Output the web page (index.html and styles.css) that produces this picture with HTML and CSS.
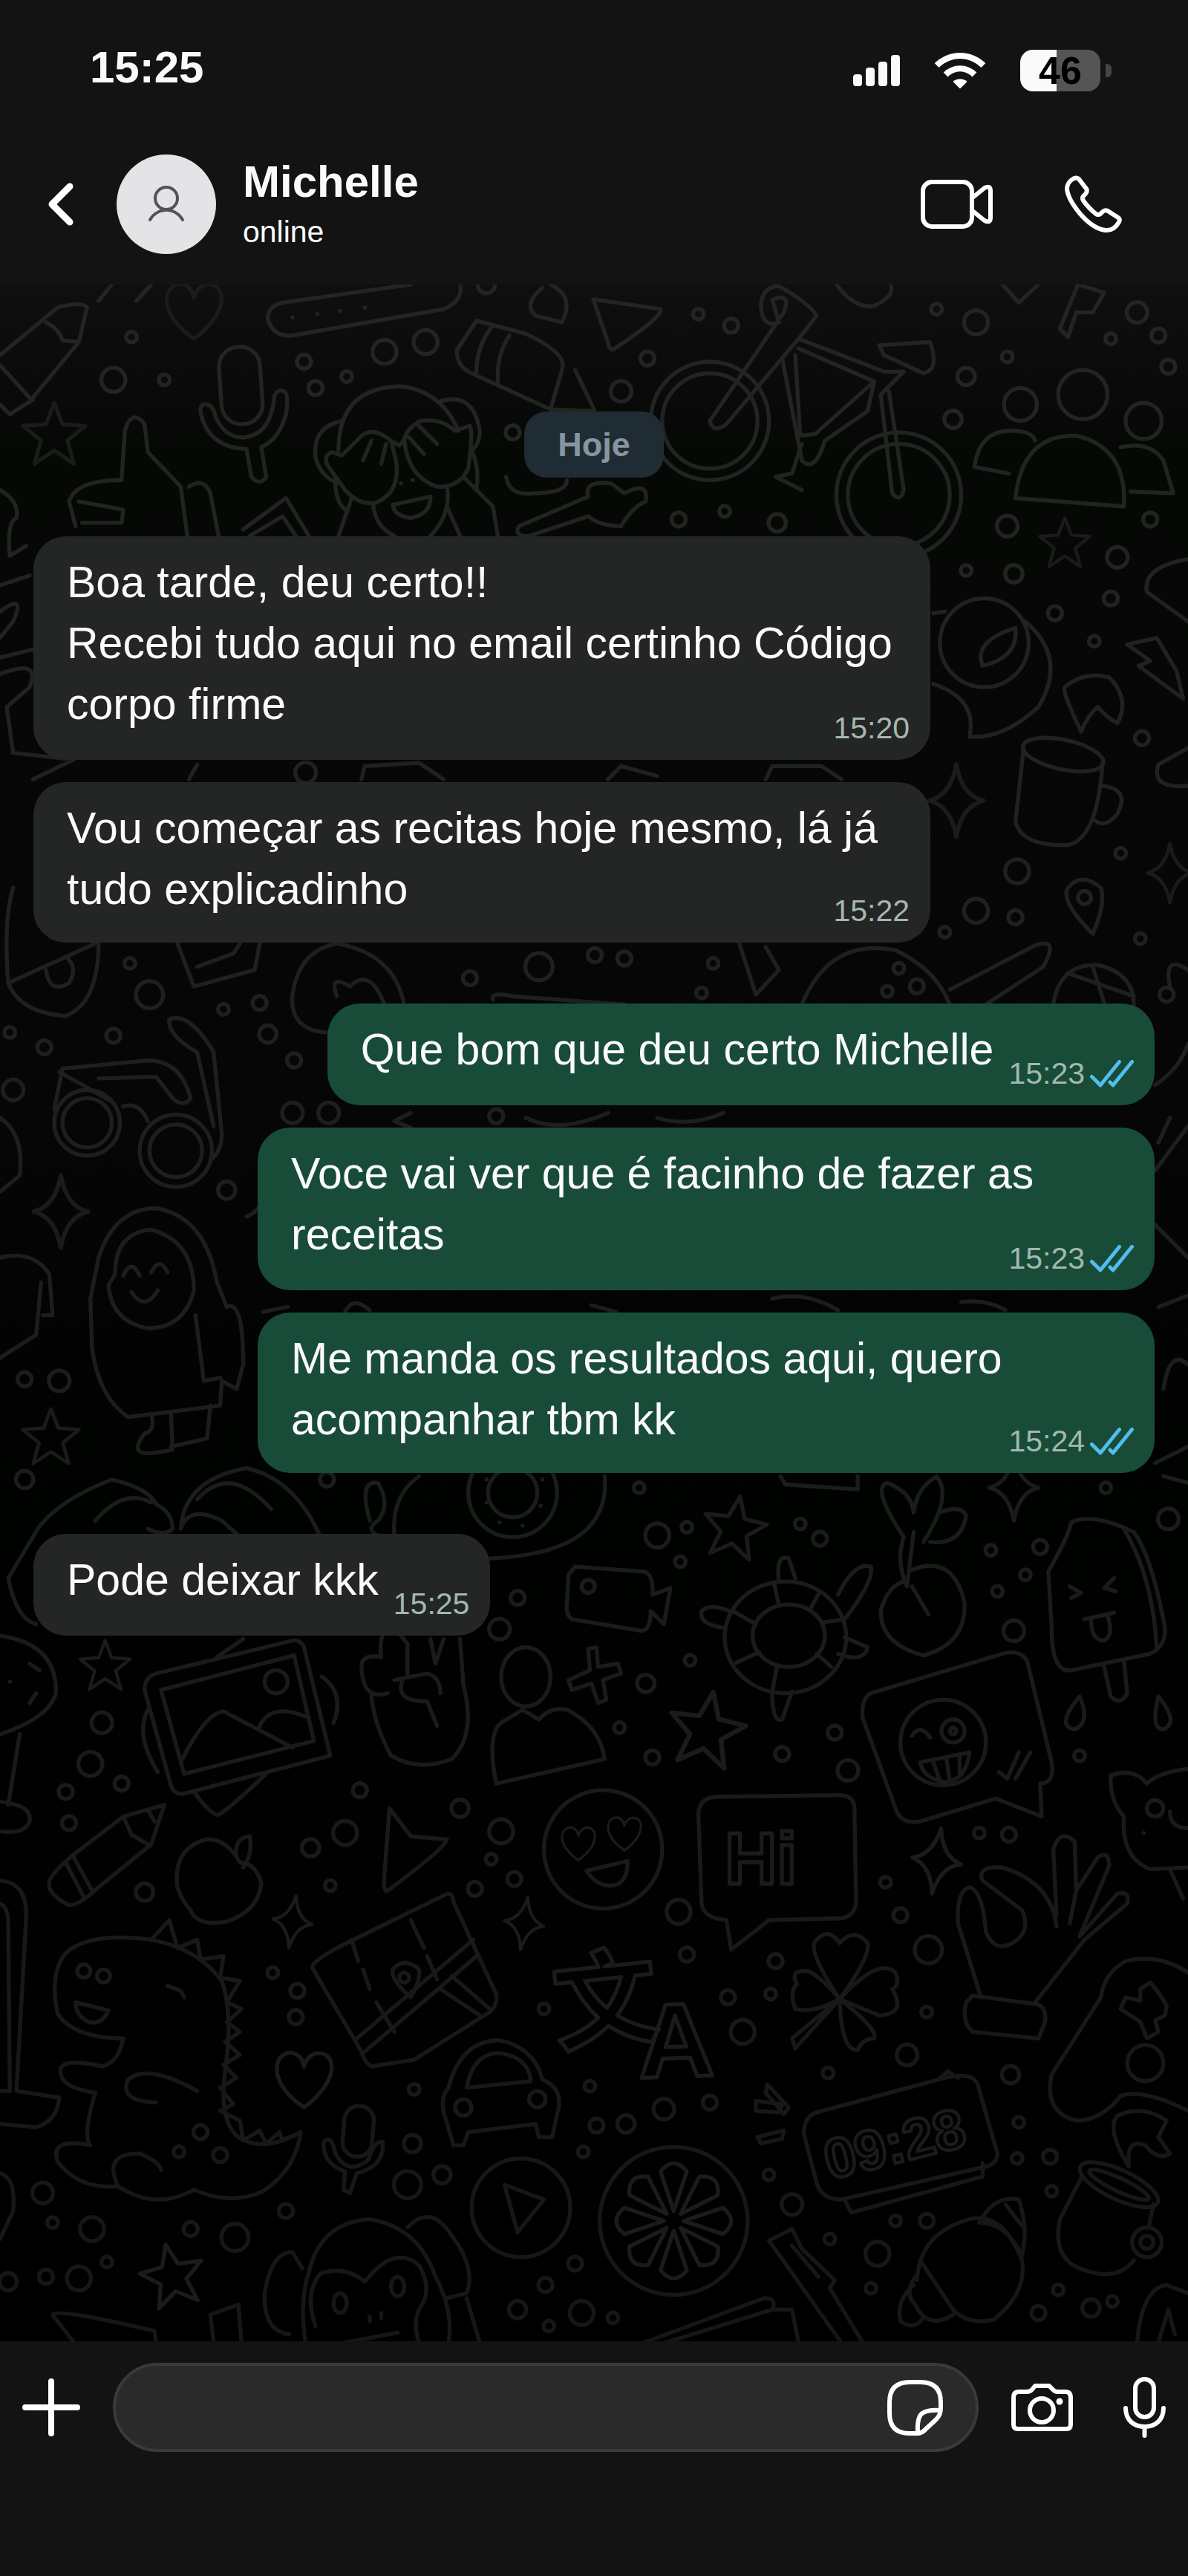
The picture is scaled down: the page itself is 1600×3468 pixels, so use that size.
FILE: index.html
```html
<!DOCTYPE html>
<html lang="pt-BR">
<head>
    <meta charset="UTF-8">
    <meta name="viewport" content="width=device-width, initial-scale=1.0">
    <title>Michelle</title>
    <link rel="stylesheet" href="styles.css">
</head>
<body>
<header class="top">
    <div class="status">
        <time class="clock">15:25</time>
        <div class="statusIcons">
            <svg width="63" height="42" viewBox="0 0 63 42" fill="#fafafa">
                <rect x="0" y="26" width="12" height="16" rx="4"/>
                <rect x="17" y="17" width="12" height="25" rx="4"/>
                <rect x="34" y="9" width="12" height="33" rx="4"/>
                <rect x="51" y="0" width="12" height="42" rx="4"/>
            </svg>
            <svg width="70" height="50" viewBox="0 0 70 50" fill="#fff">
                <path d="M0.7 15A49 49 0 0 1 69.3 15L63.5 21A40 40 0 0 0 6.5 21Z"/>
                <path d="M12.7 27.5A31.5 31.5 0 0 1 57.3 27.5L51.5 33.5A22.5 22.5 0 0 0 18.5 33.5Z"/>
                <path d="M25.5 40A14 14 0 0 1 44.5 40L36 48.5Q35 49.5 34 48.5Z"/>
            </svg>
            <div class="battery"><span class="level">46</span></div>
        </div>
    </div>
    <div class="contact">
        <button class="icon back" aria-label="Voltar">
            <svg width="34" height="58" viewBox="0 0 34 58"><path d="M29 5L5 29L29 53" stroke-width="9"/></svg>
        </button>
        <div class="avatar">
            <svg width="60" height="60" viewBox="0 0 60 60" fill="none" stroke="#52525b" stroke-width="4" stroke-linecap="round">
                <circle cx="30" cy="22" r="15"/>
                <path d="M8 51A25 25 0 0 1 52 51"/>
            </svg>
        </div>
        <div class="who">
            <h1>Michelle</h1>
            <p>online</p>
        </div>
        <button class="icon video" aria-label="Chamada de vídeo">
            <svg width="98" height="66" viewBox="0 0 98 66">
                <rect x="3" y="3" width="66" height="60" rx="12"/>
                <path d="M70 24L86 11Q94 7 94 15V51Q94 59 86 55L70 42"/>
            </svg>
        </button>
        <button class="icon" aria-label="Ligar">
            <svg width="78" height="78" viewBox="0 0 78 78"><path d="M11 5Q15 2 19 5L29 18Q31 21 28 25L25 28Q23 31 25 34Q32 44 42 52Q45 54 48 52L51 49Q54 46 58 48L72 57Q75 59 73 63Q66 75 55 74Q38 72 20 51Q3 30 3 17Q4 9 11 5Z"/></svg>
        </button>
    </div>
</header>

<main class="chat">
    <svg class="wallpaper" viewBox="0 173 723 1252" preserveAspectRatio="xMidYMin slice" aria-hidden="true">
        <defs>
            <linearGradient id="ink" gradientUnits="userSpaceOnUse" x1="0" y1="173" x2="0" y2="1425">
                <stop offset="0" stop-color="#232522"/>
                <stop offset="1" stop-color="#151716"/>
            </linearGradient>
            <path id="star" d="M0-20L5-7L19-6L8 3L12 17L0 9L-12 17L-8 3L-19-6L-5-7Z"/>
            <path id="spark" d="M0-20Q3-3 15 0Q3 3 0 20Q-3 3-15 0Q-3-3 0-20Z"/>
            <path id="heart" d="M0 16C-26-2-16-20-6-17Q-1-15 0-9Q2-16 8-17C20-18 22 0 0 16Z"/>
            <path id="slice" d="M0-6L-8-30Q0-40 8-30Z"/>
        </defs>
        <g id="doodles" fill="none" stroke="url(#ink)" stroke-width="2.4" stroke-linejoin="round" stroke-linecap="round">
            <!-- stars, sparkles, hearts -->
            <use href="#star" transform="translate(33 265)"/>
            <use href="#star" transform="translate(648 331) scale(.8)"/>
            <use href="#star" transform="translate(447 930) rotate(10)"/>
            <use href="#star" transform="translate(430 1053) rotate(10) scale(1.2)"/>
            <use href="#star" transform="translate(64 1014) scale(.8)"/>
            <use href="#star" transform="translate(31 875) scale(.9)"/>
            <use href="#star" transform="translate(105 1385) rotate(-12)"/>
            <use href="#spark" transform="translate(37 737) scale(1.1)"/>
            <use href="#spark" transform="translate(582 487) scale(1.1)"/>
            <use href="#spark" transform="translate(712 531) scale(.9)"/>
            <use href="#spark" transform="translate(617 905)"/>
            <use href="#spark" transform="translate(178 1169) rotate(8) scale(.8)"/>
            <use href="#spark" transform="translate(319 1170) rotate(8) scale(.8)"/>
            <use href="#spark" transform="translate(570 1132) rotate(8)"/>
            <use href="#heart" transform="translate(118 190)"/>
            <use href="#heart" transform="translate(185 1266)"/>
            <!-- top -->
            <path d="M0 216L35 187Q50 183 53 187L48 208L19 243L0 222M0 246L6 252L20 243M28 196Q36 200 38 207L48 208"/>
            <path d="M280 173Q282 183 270 188L178 204Q166 205 163 194Q163 186 172 184L250 173M178 193h.1M193 191h.1M207 189h.1M222 187h.1"/>
            <path d="M60 183L68 173M83 183L92 173M330 175Q318 185 326 192L342 196Q350 180 335 173M361 182L402 188Q404 192 374 212Q371 214 370 208Z"/>
            <path d="M509 173Q520 188 532 186Q545 180 542 173M610 173L620 184L632 173M645 200L656 173L672 178L665 190L655 190L650 205Z"/>
            <rect x="134" y="211" width="25" height="47" rx="12" transform="rotate(-4 146 234)"/>
            <path d="M122 250Q122 245 126 246Q130 247 131 253Q137 267 149 266Q165 264 167 241Q169 236 173 238Q176 240 174 252Q170 267 159 272L162 290Q158 296 153 290L150 273Q126 272 122 250Z"/>
            <path d="M290 195L278 213Q278 222 285 226L335 249L342 225Q346 215 320 203ZM300 198Q290 210 290 226M310 204Q302 216 303 232M335 249L362 250L350 225"/>
            <path d="M206 274Q206 236 243 235Q268 237 279 262M208 256Q190 260 192 278Q195 290 206 294M208 277L202 275Q196 277 200 284L210 298Q218 307 228 306Q244 300 241 280L238 268Q226 258 218 267ZM226 268L221 280M235 270L232 282M238 268L243 271L247 266M246 267Q248 260 256 256Q268 254 277 262L286 259Q288 262 285 285L282 290Q275 297 266 296Q248 290 246 267M249 266L258 276M254 258L266 270M268 244Q288 238 292 262Q292 270 287 274Q292 285 290 297M227 306Q228 320 240 326M272 296Q275 312 262 326M283 291L300 308L303 326M272 308L280 326M214 303L206 326M204 292Q204 305 210 310M239 307L262 302Q262 313 250 315Q240 314 239 307M244 294h.1M251 292h.1"/>
            <!-- bicycle -->
            <circle cx="432" cy="256" r="36"/><circle cx="432" cy="256" r="29"/>
            <circle cx="547" cy="301" r="38"/><circle cx="547" cy="301" r="31"/>
            <path d="M432 256L477 190Q482 178 470 182L474 196Q464 200 463 186Q464 174 474 174Q492 184 497 192L486 206L442 258Q434 264 432 256M476 218L488 280Q496 288 502 268L528 250L532 232L486 212M484 216L487 265L496 264L532 232M486 206L538 226L550 226L536 240L543 300Q548 306 550 298L541 238M535 210L566 208Q572 225 562 227L538 216ZM488 270L482 288L472 290L488 298"/>
            <!-- group -->
            <circle cx="621" cy="246" r="10"/><circle cx="659" cy="240" r="15"/><circle cx="696" cy="256" r="11"/>
            <path d="M618 303Q622 264 655 265Q686 272 684 308ZM614 288L593 284Q596 262 615 262Q628 262 630 268M682 272Q700 268 708 280L714 300L688 299"/>
            <path d="M46 320L42 305Q46 292 74 292L76 262Q80 248 88 258L90 275L110 296L114 326M115 296Q124 290 128 300L133 326M48 305L75 310L74 318L50 318"/>
            <path d="M148 322L174 303L188 326M152 326L172 314L180 326"/>
            <path d="M308 290Q310 302 325 300Q345 300 345 292M316 320L358 302Q355 292 372 294L380 300Q395 292 393 305Q385 308 378 320Q365 320 358 314L322 326Q312 326 316 320"/>
            <path d="M0 298Q12 305 10 315Q4 318 6 338L16 332M0 356L18 350M0 372Q16 360 8 378L0 388M0 400L20 395M0 410Q25 400 18 418L4 430L8 458L45 462L20 474"/>
            <circle cx="599" cy="391" r="27"/>
            <path d="M624 378Q650 400 632 430Q610 450 590 448M568 416Q595 425 590 448M568 373L575 372M598 405Q592 390 618 382Q620 400 598 405Z"/>
            <path d="M658 445Q646 420 648 418Q660 408 675 412Q688 425 680 440Q672 435 668 430Q662 435 658 445M686 392L704 388L716 408L720 425L693 405L700 402ZM723 340Q695 345 698 360L723 378"/>
            <ellipse cx="647" cy="459" rx="25" ry="9" transform="rotate(12 647 459)"/>
            <path d="M623 455L618 500Q622 515 650 514Q668 510 671 464M671 478Q688 480 680 495Q672 505 665 498M723 478Q700 480 705 465L723 455"/>
            <path d="M665 568Q645 548 650 540Q658 530 670 540Q673 550 665 568Z"/><circle cx="660" cy="546" r="4"/>
            <path d="M115 474L120 465M220 474L222 466L255 464L270 474M370 474L378 466L400 472M466 474L470 466L500 466L512 474"/>
            <!-- middle -->
            <path d="M5 598Q2 560 8 540M5 598L60 573Q60 610 40 618Q12 616 5 598M28 590Q30 605 42 598Q48 588 40 582M108 574L118 600L155 590L158 574M120 588L142 580L146 574"/>
            <path d="M198 628Q176 626 178 605Q182 578 205 574Q240 580 246 611M205 606Q200 592 213 600Q225 588 234 611M300 608Q298 603 312 606L380 611M450 574L460 605L474 590L466 576M488 611Q505 570 545 578Q570 590 578 611M578 602L630 575Q645 570 635 588L600 611"/>
            <path d="M641 611Q645 586 668 587Q690 592 690 611M650 592L690 606M665 588L672 610M723 590Q708 580 712 600"/>
            <circle cx="53" cy="683" r="20"/><circle cx="53" cy="683" r="15"/>
            <circle cx="107" cy="700" r="22"/><circle cx="107" cy="700" r="16"/>
            <path d="M33 675L38 650L90 645Q110 645 116 668Q112 674 105 668L95 655L60 656M75 673Q85 670 90 682M103 620Q115 615 130 640L135 690Q135 700 128 706M103 620Q102 630 120 640L130 685M36 652L68 670"/>
            <path d="M55 790L60 765Q70 735 95 735Q125 740 132 780L138 795Q148 790 148 830L144 845L135 840L134 855L78 862Q60 850 56 820ZM70 775Q70 750 92 748Q118 755 118 785Q112 808 90 808Q68 804 66 782ZM75 776Q80 765 85 776M92 774Q97 764 102 774M80 786Q88 798 96 785M92 860Q95 870 88 872Q78 885 92 884L105 882L104 860M104 880L126 875L128 855M119 800L124 840L134 838"/>
            <path d="M0 680Q15 690 12 715L0 725M0 765Q20 760 30 775L32 800L26 800M0 826L22 812L25 780M150 740Q165 735 165 700"/>
            <path d="M20 935Q30 915 68 900Q90 905 95 915Q105 920 105 930Q100 935 90 930M58 925Q75 905 92 914M110 930Q112 900 150 893Q180 900 195 935M120 912Q140 890 165 918M110 930Q115 915 135 925L145 934M20 935L5 960Q10 985 22 988"/>
            <circle cx="312" cy="908" r="27"/><circle cx="312" cy="908" r="15"/>
            <path d="M240 934Q238 910 255 898M368 898Q372 945 298 948M296 900h.1M330 900h.1M296 914h.1M329 916h.1M304 926h.1M318 928h.1M225 925Q218 900 230 902Q238 915 230 925Q222 930 230 934M475 898L478 903L522 906L522 898M708 898L723 902"/>
            <path d="M703 660Q718 650 723 635M703 712L723 685M705 695L712 680M703 745L723 765M705 795L723 788M708 845Q712 820 723 830M703 890L723 880M160 798L175 795M210 798Q215 788 225 797M360 794L375 798M470 790Q490 785 510 797M585 792Q600 790 612 797M250 677L240 682L250 686M320 680Q340 690 370 677M400 680Q420 686 440 677"/>
            <!-- plant, camcorder, turtle, popsicle -->
            <path d="M550 935Q530 905 540 902Q555 908 556 920Q558 905 570 898Q580 910 562 938M572 920Q585 915 588 922Q585 940 566 938M550 935Q545 950 552 965M556 932L552 965M550 962Q540 965 536 980Q536 1000 562 1007Q588 1000 587 975Q580 945 555 955M555 965L565 982"/>
            <path d="M350 953L392 956Q398 958 397 970L408 966L404 988L396 980Q396 992 390 992L348 985Q344 982 345 975L346 958Z"/><circle cx="358" cy="965" r="4"/>
            <ellipse cx="478" cy="996" rx="37" ry="34"/><ellipse cx="480" cy="995" rx="22" ry="19"/>
            <path d="M474 962Q472 945 480 948L484 960M510 970Q520 950 530 953Q532 962 514 985M440 990Q425 988 427 980Q432 975 444 980M514 996L528 1002Q526 1012 510 1006M470 1030Q470 1048 476 1046L482 1029M446 980L460 988M500 987L514 985M497 1006L506 1014M473 1013L470 1029M447 1012L462 1005M474 976L471 963M493 979L499 968"/>
            <path d="M638 956Q650 935 652 926Q665 920 690 932Q700 945 708 985Q712 1000 700 1006L652 1016Q640 1018 640 990ZM672 1014L676 1032Q682 1038 686 1030L684 1010M684 930Q702 960 704 1004M651 965L658 969L652 972M678 960L672 966L679 968M660 985L678 981M664 985Q664 998 672 998Q678 995 674 983"/>
            <path d="M358 1003L363 1002L364 1014L376 1012L378 1018L367 1022L369 1034L364 1036L360 1024L348 1028L346 1022L359 1016Z"/>
            <!-- photo, peace sign, person, wink -->
            <path d="M95 1018L178 998Q183 997 185 1002L201 1068L112 1091Q106 1092 104 1086L88 1028Q88 1020 95 1018ZM98 1028L179 1007L191 1059L112 1079ZM110 1072Q125 1042 136 1041L178 1063M158 1050Q165 1035 188 1045M118 1090Q128 1104 133 1104Q140 1100 163 1078M196 1020Q210 1030 203 1048M90 1040Q82 1055 96 1078M132 1008L148 997"/><circle cx="168" cy="1023" r="7"/>
            <path d="M236 1030Q220 1035 220 1012Q222 1006 232 1008Q230 990 240 990L248 1000L248 1020M262 997L265 1012L270 997M280 997L282 1025Q290 1055 275 1070Q255 1078 238 1068Q228 1050 226 1032M240 1022L260 1018Q268 1020 268 1030M245 1022Q240 1035 260 1035L266 1050"/>
            <ellipse cx="320" cy="1020" rx="15" ry="18"/>
            <path d="M302 1085Q296 1055 305 1048L318 1040L328 1046Q335 1038 345 1040Q365 1050 368 1070Z"/>
            <path d="M530 1030L610 1006Q620 1003 625 1010L640 1072Q642 1085 633 1085L634 1105L606 1094L560 1108Q548 1110 545 1100L525 1045Q524 1033 530 1030ZM555 1056Q560 1048 566 1057M560 1072L590 1066Q588 1083 575 1084Q562 1082 560 1072M568 1072L572 1083M576 1070L578 1083M584 1068L584 1079M608 1078L613 1082L620 1066M618 1082L627 1066"/>
            <circle cx="574" cy="1060" r="26"/><circle cx="580" cy="1053" r="7"/><circle cx="580" cy="1053" r="2"/>
            <path d="M657 1032Q642 1050 654 1052Q664 1048 657 1032M705 1032Q700 1052 708 1052Q718 1048 705 1032"/>
            <path d="M723 1076Q705 1078 698 1085Q690 1075 676 1080Q675 1095 684 1105Q682 1130 700 1137L723 1136M712 1137L720 1155M696 1115h.1M712 1102Q712 1112 723 1112"/><circle cx="703" cy="1100" r="5"/>
            <path d="M0 995Q35 1000 34 1030Q30 1045 0 1055M12 1055L5 1098M0 1096Q20 1098 18 1108Q15 1116 0 1114M18 1012L24 1016M6 1023h.1M22 1030L18 1036"/>
            <!-- crayon, apple, pointer, faces -->
            <path d="M30 1147Q28 1142 45 1128L75 1105L100 1098L92 1122L60 1148Q45 1162 40 1158Q30 1152 30 1147ZM45 1130L56 1150M40 1133L51 1154M75 1105L80 1116L90 1122M90 1101L94 1108"/>
            <path d="M146 1133Q138 1118 125 1119Q105 1125 108 1148Q110 1155 116 1162Q120 1172 138 1169Q158 1162 159 1145Q155 1133 146 1133M144 1130Q142 1118 152 1117Q154 1128 148 1136M237 1100L250 1117L272 1119Q270 1125 236 1150Q233 1152 234 1140Z"/>
            <circle cx="367" cy="1125" r="36"/>
            <use href="#heart" transform="translate(352 1122) scale(.6)"/>
            <use href="#heart" transform="translate(380 1116) scale(.6)"/>
            <path d="M357 1138L382 1132Q382 1148 370 1147Q362 1146 357 1138"/>
            <path d="M437 1093L510 1092Q520 1092 520 1100L521 1157Q520 1167 510 1167L468 1168L445 1186L442 1168Q428 1167 427 1158L425 1103Q426 1093 437 1093Z"/>
            <text class="hi" x="441" y="1146">Hi</text>
            <path d="M597 1215L583 1170Q582 1150 590 1148Q598 1150 600 1175Q605 1188 616 1182Q628 1175 622 1162L598 1144Q594 1135 610 1136Q640 1145 643 1172M643 1165L641 1125Q645 1112 654 1120L655 1150L651 1170M655 1150L668 1130Q675 1125 675 1135L657 1178L680 1152Q688 1150 686 1158L660 1180L630 1218M592 1214L630 1219Q637 1220 636 1230L632 1240L592 1236Q585 1230 588 1218Z"/>
            <!-- map, letters, clover, car, dinosaur -->
            <path d="M215 1180L272 1152Q276 1152 276 1157L302 1213Q303 1220 298 1224L252 1253L226 1257Q222 1255 220 1248L190 1197Q190 1192 215 1180ZM216 1241L288 1180M222 1248L290 1190M268 1210L292 1226M275 1202L298 1222M214 1180L218 1193M221 1198L225 1210M229 1218L240 1236M250 1168L258 1185M260 1190L266 1204M250 1215Q238 1205 239 1198Q246 1190 255 1198Q256 1205 250 1215"/><circle cx="246" cy="1203" r="3"/>
            <text class="letter" transform="translate(339 1243) rotate(-6)">文</text>
            <text class="letter" transform="translate(389 1264) rotate(-2)">A</text>
            <path d="M511 1216Q490 1185 497 1180Q504 1172 511 1182Q520 1172 528 1182Q530 1190 511 1216Q535 1190 545 1200Q548 1208 543 1210Q552 1225 535 1226Q525 1222 511 1216Q535 1235 532 1240Q525 1240 522 1247Q512 1248 511 1216Q495 1225 484 1222Q480 1212 485 1207Q480 1198 492 1199Q500 1203 511 1216L484 1246L482 1240Z"/>
            <path d="M273 1270Q280 1242 303 1241Q325 1245 330 1265Q342 1270 340 1282L336 1300L328 1300L326 1292L285 1297L282 1305L276 1305L270 1285Q268 1275 273 1270ZM284 1270Q288 1248 305 1249Q322 1252 323 1266Z"/><circle cx="282" cy="1282" r="5"/><circle cx="327" cy="1277" r="5"/>
            <path d="M92 1180Q120 1185 135 1205Q142 1225 137 1260Q133 1290 145 1300Q160 1310 183 1297Q180 1320 160 1333Q140 1342 118 1332Q95 1345 72 1330Q48 1332 35 1315Q30 1300 55 1305Q50 1300 58 1273Q35 1270 37 1258Q40 1252 62 1257Q72 1255 75 1240Q45 1240 35 1225Q30 1200 40 1188Q55 1175 92 1180L103 1168L108 1185L120 1180L122 1192L136 1190L134 1203L146 1205L138 1218L147 1222L138 1230L146 1236L137 1242L146 1250L136 1256L144 1264L134 1270L142 1280L134 1284L146 1290L148 1302L158 1296L162 1304L170 1297L172 1302L183 1297M46 1218L66 1223Q62 1232 54 1230Q46 1226 46 1218M120 1272Q90 1255 78 1265Q72 1278 95 1279M72 1330Q62 1310 85 1310Q97 1315 98 1320M102 1208L110 1211L112 1215"/>
            <circle cx="51" cy="1199" r="4"/><circle cx="63" cy="1202" r="4"/>
            <path d="M0 1144Q16 1145 16 1165L10 1272L36 1276Q35 1290 22 1294L0 1292M0 1158Q5 1160 5 1170L6 1272L0 1272"/>
            <rect x="209" y="1281" width="18" height="31" rx="9" transform="rotate(5 218 1296)"/>
            <path d="M197 1303Q202 1298 204 1310Q212 1324 224 1314Q228 1302 233 1303Q234 1318 217 1322L213 1334L209 1332L210 1321Q196 1316 197 1303Z"/>
            <!-- bottom -->
            <circle cx="317" cy="1343" r="30"/><path d="M307 1329L331 1338L315 1358Z"/>
            <circle cx="410" cy="1351" r="45"/>
            <g transform="translate(410 1351)">
                <use href="#slice"/><use href="#slice" transform="rotate(45)"/><use href="#slice" transform="rotate(90)"/><use href="#slice" transform="rotate(135)"/>
                <use href="#slice" transform="rotate(180)"/><use href="#slice" transform="rotate(225)"/><use href="#slice" transform="rotate(270)"/><use href="#slice" transform="rotate(315)"/>
            </g>
            <path d="M497 1285L575 1264Q592 1260 595 1268L607 1310Q607 1316 600 1318L512 1338Q500 1338 497 1328L489 1297Q490 1287 497 1285ZM514 1338L518 1346L598 1324L598 1316M572 1264L577 1260L583 1264M467 1268L480 1282L477 1286L466 1273ZM460 1278L476 1280L474 1285L460 1284ZM461 1300L477 1296L476 1301L463 1304Z"/>
            <text class="alarm" transform="translate(505 1326) rotate(-14)">09:28</text>
            <path d="M558 1387Q560 1358 590 1350Q610 1345 622 1375Q625 1395 605 1411Q590 1415 580 1405L560 1375M596 1352Q605 1335 620 1338Q626 1355 622 1372Q612 1352 596 1352M612 1341Q620 1352 624 1356M557 1385Q550 1395 557 1402Q565 1418 580 1408M556 1390Q545 1400 548 1412Q556 1418 562 1410"/>
            <path d="M658 1325L645 1350Q640 1375 660 1381Q680 1388 690 1375M702 1341L699 1355M687 1318Q673 1295 680 1287Q695 1280 710 1290L705 1300L712 1310Q705 1315 697 1305Q685 1300 687 1318"/>
            <ellipse cx="681" cy="1329" rx="26" ry="9" transform="rotate(25 681 1329)"/><ellipse cx="681" cy="1329" rx="20" ry="4" transform="rotate(25 681 1329)"/>
            <circle cx="698" cy="1364" r="9"/><circle cx="698" cy="1364" r="4"/>
            <path d="M723 1200Q705 1188 685 1193Q672 1200 670 1215L640 1262Q635 1285 655 1290Q670 1290 682 1275Q695 1270 723 1284M694 1210L700 1206L705 1212L710 1220L709 1226L703 1229L705 1236L698 1240L694 1230L682 1222L685 1215L694 1217Z"/><circle cx="697" cy="1255" r="11"/>
            <path d="M468 1363L482 1356L488 1368L508 1387L505 1392L525 1425M468 1363L512 1425M482 1366L498 1385M392 1425L465 1398Q473 1398 470 1405L482 1405L486 1425M405 1425L470 1405"/>
            <path d="M188 1382Q195 1352 225 1350Q255 1355 265 1385Q276 1405 273 1425M188 1382Q182 1400 186 1425M176 1420Q160 1418 161 1395Q165 1370 178 1370L184 1380M248 1355Q262 1340 275 1360Q290 1380 284 1395L272 1398M192 1415Q185 1395 195 1383Q210 1378 222 1388Q240 1365 255 1378Q262 1390 258 1400Q250 1410 255 1425M284 1398L292 1425M225 1409v3M232 1407v3M210 1425L242 1419"/>
            <ellipse cx="207" cy="1401" rx="4" ry="6"/><ellipse cx="242" cy="1391" rx="4" ry="6"/>
            <path d="M0 1322Q10 1325 8 1345L0 1362M45 1425L32 1408Q35 1404 94 1418L95 1425M130 1425L128 1408L145 1402L147 1425M692 1425Q695 1392 710 1390L723 1395M705 1425L711 1405L715 1420"/>
        </g>
    </svg>

    <div class="day">Hoje</div>

    <div class="bubble in">Boa tarde, deu certo!!<br>Recebi tudo aqui no email certinho Código corpo firme<span class="meta">15:20</span></div>
    <div class="bubble in short">Vou começar as recitas hoje mesmo, lá já tudo explicadinho<span class="meta">15:22</span></div>

    <div class="bubble out turn">Que bom que deu certo Michelle<span class="meta">15:23<svg width="59" height="37" viewBox="0 0 59 37"><path d="M2.5 22.5L14 34L39.5 2.5M27 30L31 34L56.5 2.5"/></svg></span></div>
    <div class="bubble out">Voce vai ver que é facinho de fazer as receitas<span class="meta">15:23<svg width="59" height="37" viewBox="0 0 59 37"><path d="M2.5 22.5L14 34L39.5 2.5M27 30L31 34L56.5 2.5"/></svg></span></div>
    <div class="bubble out short">Me manda os resultados aqui, quero acompanhar tbm kk<span class="meta">15:24<svg width="59" height="37" viewBox="0 0 59 37"><path d="M2.5 22.5L14 34L39.5 2.5M27 30L31 34L56.5 2.5"/></svg></span></div>

    <div class="bubble in turn">Pode deixar kkk<span class="meta">15:25</span></div>
</main>

<footer class="bottom">
    <form class="compose">
        <button class="icon" type="button" aria-label="Anexar">
            <svg width="78" height="78" viewBox="0 0 78 78"><path d="M39 4V74M4 39H74" stroke-width="8"/></svg>
        </button>
        <div class="field">
            <input type="text" aria-label="Mensagem">
            <button class="icon" type="button" aria-label="Figurinhas">
                <svg width="75" height="75" viewBox="0 0 75 75"><path d="M40 72H30Q3 72 3 45V30Q3 3 30 3H45Q72 3 72 30V38Q72 47 66 53L52 66Q47 72 40 72ZM71 41Q54 40 47 45Q40 50 41 71"/></svg>
            </button>
        </div>
        <button class="icon" type="button" aria-label="Câmera">
            <svg width="83" height="65" viewBox="0 0 83 65">
                <path d="M3 19Q3 11 10 11H21Q25 11 28 8L32 3H51L56 8Q59 11 62 11H73Q80 11 80 19V55Q80 61 74 61H9Q3 61 3 55Z"/>
                <circle cx="41" cy="36" r="16"/>
                <circle cx="65" cy="24" r="4.5" fill="#fff" stroke="none"/>
            </svg>
        </button>
        <button class="icon voice" type="button" aria-label="Gravar áudio">
            <svg width="57" height="83" viewBox="0 0 57 83">
                <rect x="16" y="3" width="25" height="51" rx="12.5"/>
                <path d="M3 42C3 58 14 67 28.500 67C43 67 54 58 54 42M28.500 67V79"/>
            </svg>
        </button>
    </form>
</footer>
<script>
// loose dots of the wallpaper: x, y, outer radius
{
    const DOTS = [
        [80,205,4],[69,231,8],[100,231,4],[185,220,5],[192,236,5],[211,229,4],[234,214,8],[259,208,8],[296,173,6],
        [425,191,4],[445,198,5],[394,218,5],[378,238,7],[312,263,5],[594,196,8],[570,188,4],[676,206,4],[692,190,7],
        [705,204,5],[613,217,4],[588,229,6],[711,223,5],[580,255,6],[700,316,5],[613,320,7],[473,318,6],[441,311,4],
        [413,316,5],[680,339,7],[588,347,4],[617,349,6],[676,364,5],[642,373,5],[666,390,4],[695,449,5],[186,470,7],
        [619,530,8],[682,519,4],[594,554,8],[618,558,5],[575,567,4],[694,571,4],[79,586,4],[91,605,9],[158,610,5],
        [136,614,4],[69,630,5],[27,637,5],[6,628,4],[163,629,6],[179,645,5],[8,663,7],[328,588,9],[286,595,5],
        [362,581,5],[380,583,5],[434,586,4],[427,604,4],[547,589,4],[558,600,5],[540,603,4],[710,605,5],[178,677,7],
        [200,677,7],[138,724,6],[302,679,5],[15,839,5],[36,840,7],[15,900,6],[199,900,5],[389,905,4],[400,934,8],
        [418,929,4],[487,927,4],[499,936,5],[414,950,4],[315,972,5],[304,991,7],[420,1010,4],[393,1024,6],
        [62,1048,7],[55,1073,8],[377,1051,4],[397,1069,5],[476,1067,5],[508,1054,5],[516,1077,7],[603,943,4],
        [633,941,5],[624,958,4],[607,968,4],[617,992,7],[711,924,7],[673,905,4],[657,1068,4],[74,1085,5],[40,1090,5],
        [42,1109,5],[88,1151,6],[219,1089,5],[280,1100,6],[210,1115,8],[189,1124,6],[305,1114,8],[299,1131,4],
        [313,1143,5],[289,1149,5],[201,1147,4],[413,1163,8],[539,1145,4],[548,1165,5],[565,1186,9],[596,1115,4],
        [614,1116,5],[418,1189,5],[472,1193,5],[166,1200,4],[181,1211,5],[180,1227,5],[331,1222,4],[443,1215,5],
        [469,1213,4],[452,1236,8],[564,1224,4],[552,1250,7],[504,1261,4],[615,1262,6],[252,1271,4],[359,1269,4],
        [404,1283,7],[432,1279,5],[363,1293,5],[381,1292,6],[122,1297,5],[109,1309,4],[134,1311,5],[251,1304,6],
        [355,1309,4],[269,1323,6],[248,1329,9],[468,1323,4],[482,1341,7],[620,1291,4],[619,1313,4],[639,1312,5],
        [640,1333,4],[545,1351,4],[564,1351,5],[505,1362,4],[534,1371,8],[26,1334,7],[32,1352,4],[56,1356,8],
        [174,1345,5],[116,1356,5],[143,1361,9],[65,1376,4],[48,1386,8],[28,1385,5],[5,1388,6],[350,1377,5],
        [332,1390,5],[315,1405,6],[354,1407,8],[334,1415,4],[373,1410,4],[530,1392,4],[644,1393,4],[632,1407,5],
        [664,1404,6],[677,1400,4]
    ];
    let doodles = document.querySelector("#doodles");
    DOTS.forEach(([x,y,r])=>{
        let dot = document.createElementNS("http://www.w3.org/2000/svg","circle");
        dot.setAttribute("cx",x);
        dot.setAttribute("cy",y);
        dot.setAttribute("r",r - .7);
        doodles.appendChild(dot);
    });
}
</script>
</body>
</html>
```
FILE: styles.css
```css
* {
    box-sizing: border-box;
}
body {
    display: flex;
    flex-direction: column;
    min-height: 100vh;
    margin: 0;
    background: #131313;
    color: #fafafa;
    font-family: "Liberation Sans", Arial, sans-serif;
}
h1, p {
    margin: 0;
}
svg {
    display: block;
    flex: none;
}
.icon {
    flex: none;
    padding: 0;
    border: 0;
    background: none;
}
.icon svg {
    fill: none;
    stroke: #fff;
    stroke-width: 6;
    stroke-linecap: round;
    stroke-linejoin: round;
}

/* top */
.status {
    display: flex;
    align-items: center;
    justify-content: space-between;
    height: 168px;
    padding: 22px 103px 0 121px;
}
.clock {
    padding-bottom: 10px;
    font-size: 60px;
    font-weight: bold;
}
.statusIcons {
    display: flex;
    align-items: center;
    gap: 46px;
}
.battery {
    display: flex;
    align-items: center;
}
.battery::after {
    content: "";
    width: 8px;
    height: 18px;
    margin-left: 7px;
    border-radius: 0 6px 6px 0;
    background: #444;
}
.level {
    width: 108px;
    border-radius: 17px;
    background: linear-gradient(90deg, #fafafa 45%, #555 45%);
    color: #000;
    font-size: 52px;
    font-weight: bold;
    line-height: 56px;
    text-align: center;
}
.contact {
    display: flex;
    align-items: center;
    height: 215px;
    padding: 0 88px 2px 65px;
}
.avatar {
    display: flex;
    align-items: center;
    justify-content: center;
    width: 134px;
    height: 134px;
    margin: 0 36px 0 58px;
    border-radius: 50%;
    background: #e4e4e7;
}
.who {
    flex: 1;
}
.who h1 {
    font-size: 60px;
    line-height: 74px;
}
.who p {
    font-size: 41px;
    line-height: 60px;
}
.video {
    margin-right: 96px;
}

/* chat */
.chat {
    position: relative;
    display: flex;
    flex: 1;
    flex-direction: column;
    align-items: flex-start;
    padding: 171px 45px 82px;
    background: linear-gradient(#0e0f0e, #060806 8%, #050605 40%, #000200 60%, #000);
}
.wallpaper {
    position: absolute;
    top: 0;
    left: 0;
    width: 100%;
    height: 100%;
}
#doodles use, #doodles text {
    stroke: #1a1c1a;
}
.hi, .letter, .alarm {
    font-family: "Liberation Sans", "Noto Sans CJK SC", sans-serif;
    font-weight: bold;
}
.hi {
    font-size: 44px;
}
.letter {
    font-size: 64px;
}
.alarm {
    font-size: 34px;
    stroke-width: 2;
}
.day {
    position: relative;
    align-self: center;
    margin-bottom: 79px;
    padding: 0 45px;
    border-radius: 30px;
    background: #1f2c34;
    color: #8696a0;
    font-size: 45px;
    font-weight: bold;
    line-height: 89px;
}
.bubble {
    position: relative;
    display: flow-root;
    max-width: 80%;
    margin-bottom: 30px;
    padding: 21px 28px 20px 45px;
    border-radius: 44px;
    font-size: 59px;
    line-height: 82px;
}
.in {
    background: #242625;
}
.out {
    align-self: flex-end;
    background: #184c38;
}
/* the other person starts writing */
.turn {
    margin-top: 52px;
}
.meta {
    display: flex;
    align-items: center;
    gap: 7px;
    float: right;
    margin: 50px 0 0 20px;
    color: #a3b8af;
    font-size: 41px;
    line-height: 46px;
}
.short .meta {
    margin-top: 47px;
}
.meta svg {
    fill: none;
    stroke: #53bdeb;
    stroke-width: 5;
    stroke-linecap: round;
    stroke-linejoin: round;
}

/* bottom */
.bottom {
    padding: 29px 30px 167px;
}
.compose {
    display: flex;
    align-items: center;
    gap: 44px;
}
.field {
    display: flex;
    flex: 1;
    align-items: center;
    height: 120px;
    padding: 0 44px;
    border: 4px solid #3a3a3b;
    border-radius: 60px;
    background: #2a2a2a;
}
.field input {
    flex: 1;
    min-width: 0;
    border: 0;
    outline: 0;
    background: none;
    color: inherit;
    font: inherit;
    font-size: 59px;
}
.voice {
    margin-left: 24px;
}
```
